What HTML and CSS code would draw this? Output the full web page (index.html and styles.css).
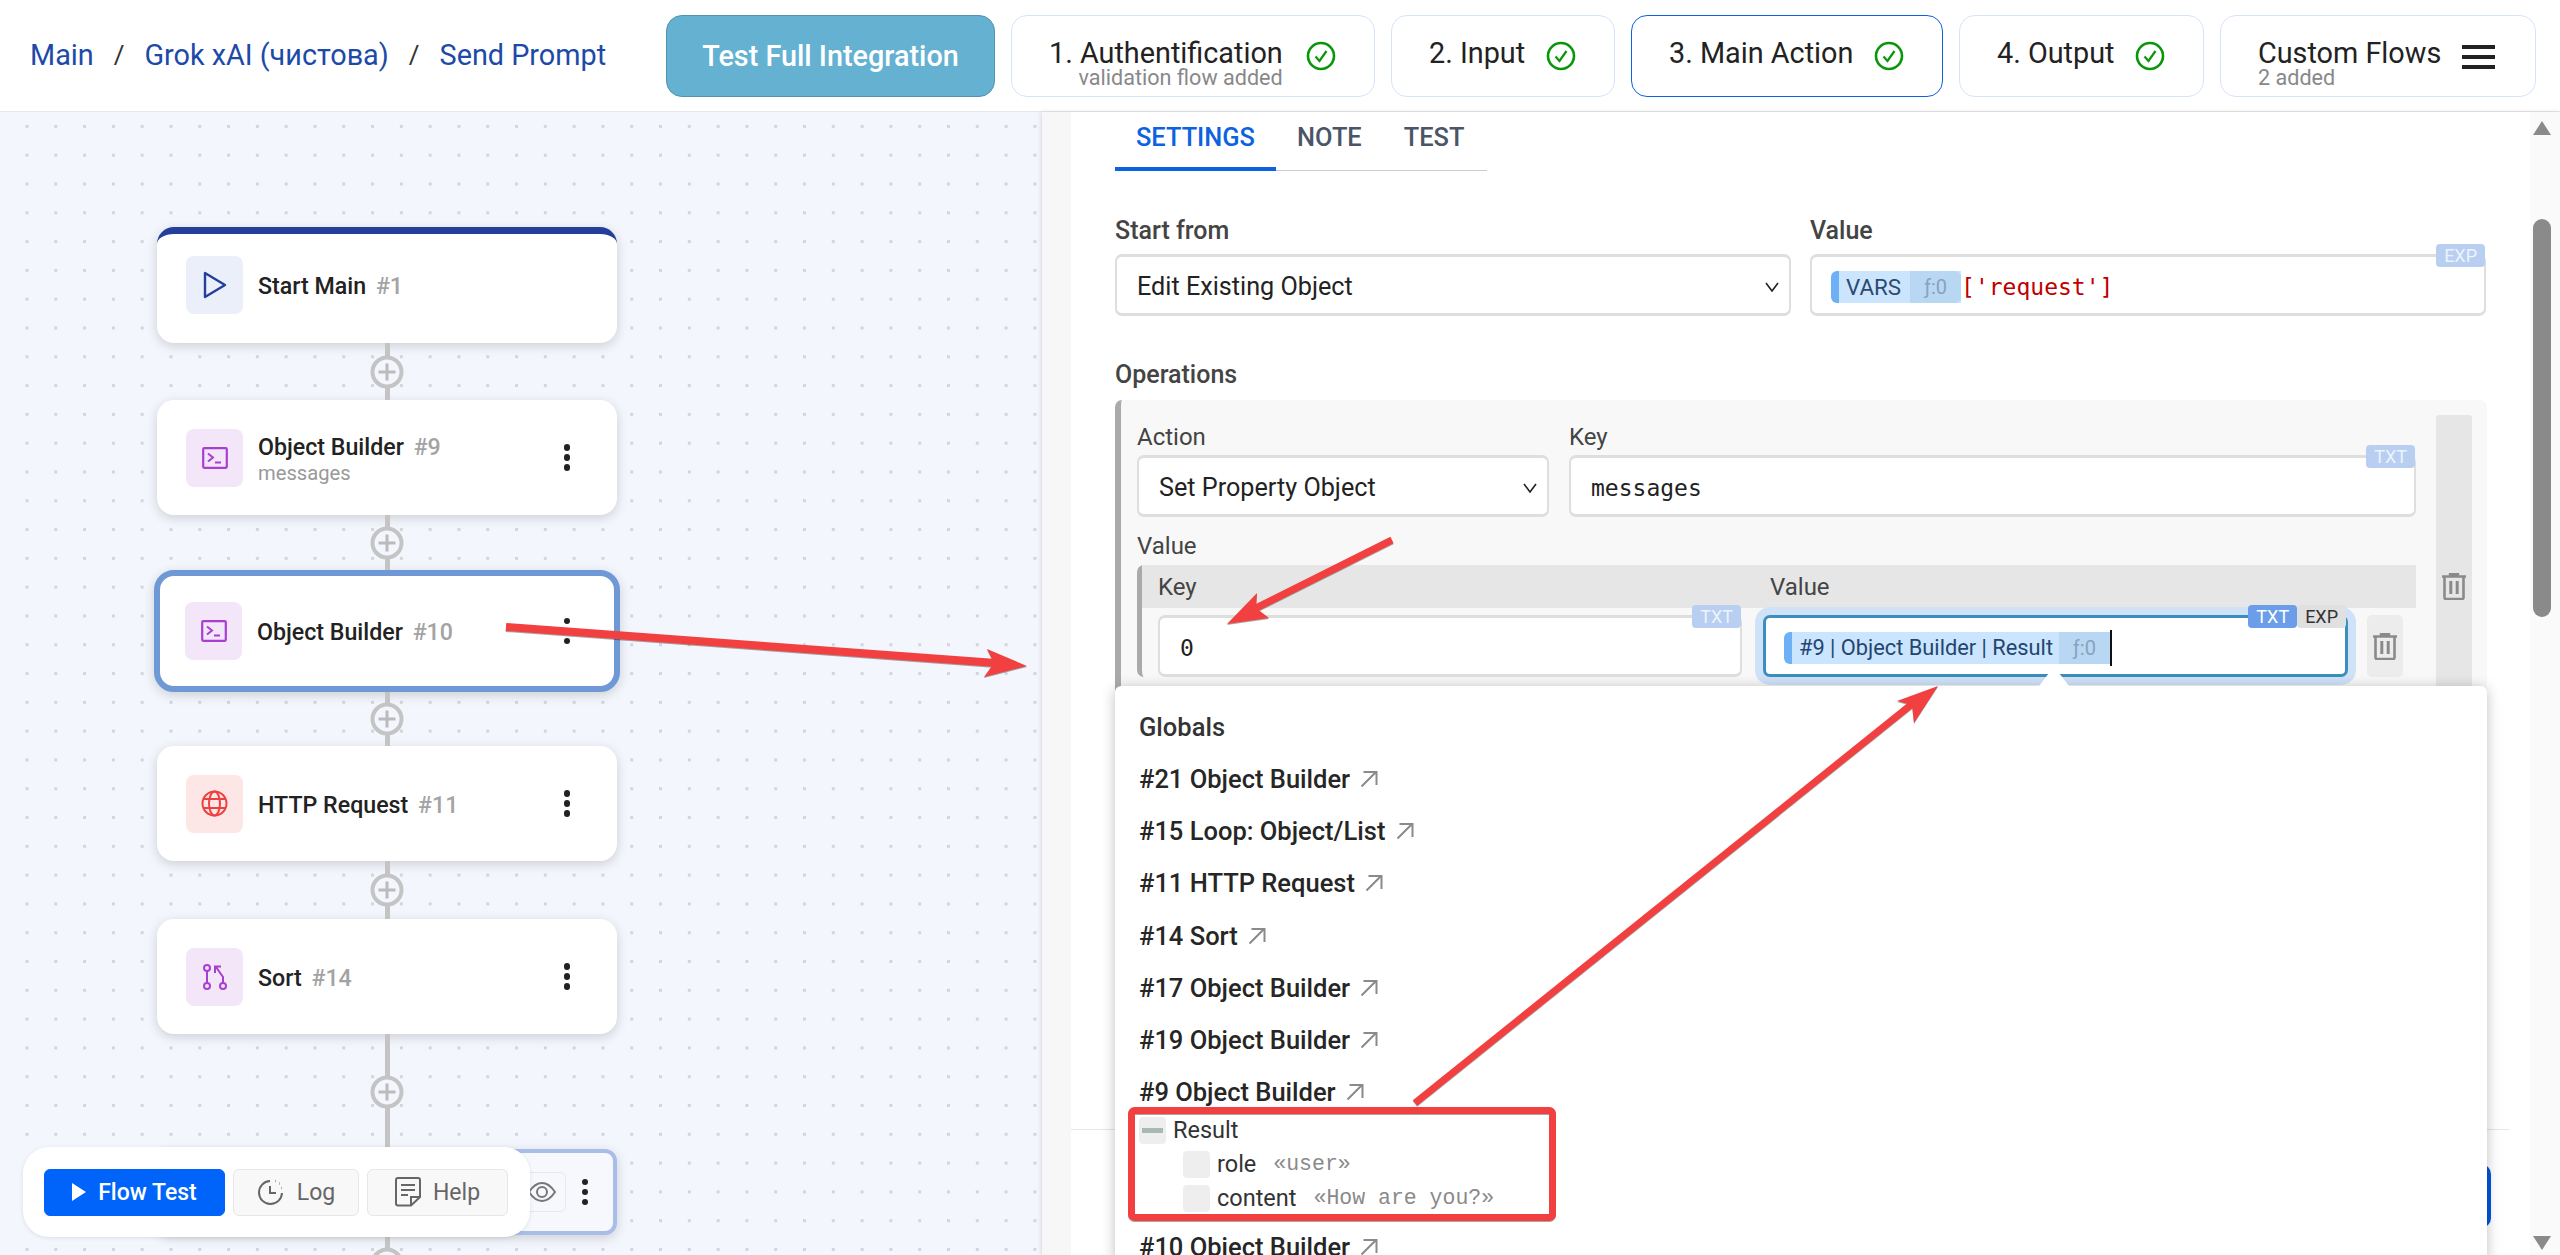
FILE: index.html
```html
<!DOCTYPE html>
<html lang="en">

<head>
    <meta charset="UTF-8">
    <meta name="viewport" content="width=device-width, initial-scale=1.0">
    <title>Send Prompt</title>
    <link rel="stylesheet" href="styles.css">
</head>

<body>
    <svg class="icon-defs" width="0" height="0">
        <symbol id="check" viewBox="0 0 30 30">
            <circle cx="15" cy="15" r="13" fill="none" stroke="currentColor" stroke-width="2.6" />
            <path d="M9.5 15.5l4 4.5 7-10" fill="none" stroke="currentColor" stroke-width="2.2" />
        </symbol>
        <symbol id="terminal" viewBox="0 0 26 22">
            <rect x="1.2" y="1.2" width="23.6" height="19.6" rx="1" fill="none" stroke="currentColor" stroke-width="2.2" />
            <path d="M6 6.5l5 4-5 4M13 15.5h6" fill="none" stroke="currentColor" stroke-width="2" />
        </symbol>
        <symbol id="trash" viewBox="0 0 24 27">
            <path d="M0 3.5h24M8 3V1h8v2" fill="none" stroke="currentColor" stroke-width="2.4" />
            <path d="M2.5 4v20.5a1.5 1.5 0 0 0 1.5 1.5h16a1.5 1.5 0 0 0 1.5-1.5V4" fill="none" stroke="currentColor" stroke-width="2.6" />
            <path d="M8.8 8v13M15.2 8v13" fill="none" stroke="currentColor" stroke-width="3" />
        </symbol>
        <symbol id="jump" viewBox="0 0 18 18">
            <path d="M1.5 16.5L16 2M3.5 2H16.5V15" fill="none" stroke="currentColor" stroke-width="2" />
        </symbol>
        <symbol id="chevron" viewBox="0 0 14 10">
            <path d="M1 1l6 8 6-8" fill="none" stroke="currentColor" stroke-width="1.6" />
        </symbol>
    </svg>

    <header class="topbar">
        <nav class="crumbs">
            <a>Main</a>
            <span class="crumb-sep">/</span>
            <a>Grok xAI (чистова)</a>
            <span class="crumb-sep">/</span>
            <a>Send Prompt</a>
        </nav>
        <div class="steps">
            <button type="button" class="test-btn">Test Full Integration</button>
            <div class="step step-auth">
                <div class="step-text">
                    <span>1. Authentification</span>
                    <small>validation flow added</small>
                </div>
                <svg class="step-check"><use href="#check" /></svg>
            </div>
            <div class="step step-input">
                <div class="step-text"><span>2. Input</span></div>
                <svg class="step-check"><use href="#check" /></svg>
            </div>
            <div class="step step-main active">
                <div class="step-text"><span>3. Main Action</span></div>
                <svg class="step-check"><use href="#check" /></svg>
            </div>
            <div class="step step-output">
                <div class="step-text"><span>4. Output</span></div>
                <svg class="step-check"><use href="#check" /></svg>
            </div>
            <div class="step step-custom">
                <div class="step-text">
                    <span>Custom Flows</span>
                    <small>2 added</small>
                </div>
                <div class="burger"><i></i><i></i><i></i></div>
            </div>
        </div>
    </header>

    <main class="workspace">
        <section class="canvas">
            <div class="flow">
                <div class="node node-start">
                    <div class="node-icon icon-blue">
                        <svg width="24" height="28" viewBox="0 0 24 28"><path d="M2 2v24l20-12z" fill="none" stroke="currentColor" stroke-width="2.4" stroke-linejoin="round" /></svg>
                    </div>
                    <div class="node-text">
                        <div class="node-title">Start Main <span>#1</span></div>
                    </div>
                </div>
                <div class="link link-57"><b></b></div>
                <div class="node">
                    <div class="node-icon icon-purple"><svg width="26" height="22"><use href="#terminal" /></svg></div>
                    <div class="node-text">
                        <div class="node-title">Object Builder <span>#9</span></div>
                        <div class="node-sub">messages</div>
                    </div>
                    <div class="dots"><i></i><i></i><i></i></div>
                </div>
                <div class="link link-55"><b></b></div>
                <div class="node node-selected">
                    <div class="node-icon icon-purple"><svg width="26" height="22"><use href="#terminal" /></svg></div>
                    <div class="node-text">
                        <div class="node-title">Object Builder <span>#10</span></div>
                    </div>
                    <div class="dots"><i></i><i></i><i></i></div>
                </div>
                <div class="link link-54"><b></b></div>
                <div class="node">
                    <div class="node-icon icon-red">
                        <svg width="27" height="27" viewBox="0 0 27 27" fill="none" stroke="currentColor" stroke-width="2">
                            <circle cx="13.5" cy="13.5" r="12" />
                            <ellipse cx="13.5" cy="13.5" rx="5.5" ry="12" />
                            <path d="M2.5 9h22M2.5 18h22" />
                        </svg>
                    </div>
                    <div class="node-text">
                        <div class="node-title">HTTP Request <span>#11</span></div>
                    </div>
                    <div class="dots"><i></i><i></i><i></i></div>
                </div>
                <div class="link link-58"><b></b></div>
                <div class="node">
                    <div class="node-icon icon-purple">
                        <svg width="26" height="26" viewBox="0 0 26 26" fill="none" stroke="currentColor" stroke-width="2">
                            <circle cx="5" cy="4" r="3" />
                            <circle cx="5" cy="22" r="3" />
                            <circle cx="21" cy="22" r="3" />
                            <path d="M5 7v12M21 19v-6l-7-10M13 9V2.5h6" />
                        </svg>
                    </div>
                    <div class="node-text">
                        <div class="node-title">Sort <span>#14</span></div>
                    </div>
                    <div class="dots"><i></i><i></i><i></i></div>
                </div>
                <div class="link link-115"><b></b></div>
                <div class="node node-last">
                    <div class="eye-btn">
                        <svg width="30" height="22" viewBox="0 0 30 22" fill="none" stroke="#777" stroke-width="2">
                            <path d="M2 11c4-6 8-9 13-9s9 3 13 9c-4 6-8 9-13 9S6 17 2 11z" />
                            <circle cx="15" cy="11" r="5" />
                        </svg>
                    </div>
                    <div class="dots"><i></i><i></i><i></i></div>
                </div>
                <div class="link link-57"><b></b></div>
            </div>

            <div class="toolbar">
                <button type="button" class="tool tool-run">
                    <svg width="14" height="18" viewBox="0 0 14 18"><path d="M0 0l14 9-14 9z" fill="#fff" /></svg>
                    Flow Test
                </button>
                <button type="button" class="tool tool-log">
                    <svg width="28" height="28" viewBox="0 0 28 28" fill="none" stroke="#666" stroke-width="2">
                        <path d="M13 3a11.5 11.5 0 1 0 12 12" />
                        <path d="M13 8v7h6" />
                        <path d="M18 3h.5M22 5.500h.5M24.500 10h.5" stroke-width="2.4" />
                    </svg>
                    Log
                </button>
                <button type="button" class="tool tool-help">
                    <svg width="26" height="30" viewBox="0 0 26 30" fill="none" stroke="#666" stroke-width="2">
                        <path d="M16 28.500H3a2 2 0 0 1-2-2V3a2 2 0 0 1 2-2h20a2 2 0 0 1 2 2v17z" />
                        <path d="M6 8h14M6 13h14M6 18h7M16 28v-8h8" />
                    </svg>
                    Help
                </button>
            </div>
        </section>

        <aside class="panel">
            <div class="panel-body">
                <div class="tabs">
                    <div class="tab active">SETTINGS</div>
                    <div class="tab">NOTE</div>
                    <div class="tab">TEST</div>
                </div>

                <div class="field-row">
                    <div>
                        <label class="label">Start from</label>
                        <div class="input select">Edit Existing Object <svg width="14" height="10"><use href="#chevron" /></svg></div>
                    </div>
                    <div>
                        <label class="label">Value</label>
                        <div class="input">
                            <span class="chip"><span class="chip-name">VARS</span><span class="chip-count">ƒ:0</span></span>
                            <code class="code-red">['request']</code>
                            <div class="badges"><span class="badge">EXP</span></div>
                        </div>
                    </div>
                </div>

                <label class="label label-ops">Operations</label>
                <div class="ops">
                    <div class="ops-main">
                        <div class="ops-row">
                            <div class="ops-action">
                                <label class="label-small">Action</label>
                                <div class="input select">Set Property Object <svg width="14" height="10"><use href="#chevron" /></svg></div>
                            </div>
                            <div class="ops-key">
                                <label class="label-small">Key</label>
                                <div class="input">
                                    <code>messages</code>
                                    <div class="badges"><span class="badge">TXT</span></div>
                                </div>
                            </div>
                        </div>
                        <label class="label-small label-value">Value</label>
                        <div class="nested">
                            <div class="nested-head">
                                <span class="nested-key">Key</span>
                                <span>Value</span>
                            </div>
                            <div class="nested-row">
                                <div class="input nested-input">
                                    <code>0</code>
                                    <div class="badges"><span class="badge">TXT</span></div>
                                </div>
                                <div class="input nested-input focused">
                                    <span class="chip chip-small"><span class="chip-name">#9 | Object Builder | Result</span><span class="chip-count">ƒ:0</span></span>
                                    <span class="caret"></span>
                                    <div class="badges"><span class="badge badge-on">TXT</span><span class="badge badge-off">EXP</span></div>
                                </div>
                                <div class="del-small"><svg width="24" height="27"><use href="#trash" /></svg></div>
                            </div>
                        </div>
                    </div>
                    <div class="del-col"><svg width="24" height="27"><use href="#trash" /></svg></div>
                </div>

                <div class="panel-foot">
                    <button type="button" class="save-btn"></button>
                </div>

                <!-- Variable picker opened from the focused input -->
                <div class="picker">
                    <div class="picker-tip"></div>
                    <div class="picker-title">Globals</div>
                    <div class="picker-item">#21 Object Builder <svg width="18" height="18"><use href="#jump" /></svg></div>
                    <div class="picker-item">#15 Loop: Object/List <svg width="18" height="18"><use href="#jump" /></svg></div>
                    <div class="picker-item">#11 HTTP Request <svg width="18" height="18"><use href="#jump" /></svg></div>
                    <div class="picker-item">#14 Sort <svg width="18" height="18"><use href="#jump" /></svg></div>
                    <div class="picker-item">#17 Object Builder <svg width="18" height="18"><use href="#jump" /></svg></div>
                    <div class="picker-item">#19 Object Builder <svg width="18" height="18"><use href="#jump" /></svg></div>
                    <div class="picker-item picker-open">#9 Object Builder <svg width="18" height="18"><use href="#jump" /></svg></div>
                    <div class="tree">
                        <div class="tree-row">
                            <span class="tree-box"><i></i></span>Result
                        </div>
                        <div class="tree-row tree-child">
                            <span class="tree-box"></span>role <em>«user»</em>
                        </div>
                        <div class="tree-row tree-child">
                            <span class="tree-box"></span>content <em>«How are you?»</em>
                        </div>
                    </div>
                    <div class="picker-item picker-next">#10 Object Builder <svg width="18" height="18"><use href="#jump" /></svg></div>
                </div>
            </div>

            <div class="scrollbar">
                <div class="scroll-up"></div>
                <div class="scroll-thumb"></div>
                <div class="scroll-down"></div>
            </div>
        </aside>
    </main>

    <!-- Red arrows drawn over the screenshot -->
    <svg class="annotations" width="2560" height="1255" viewBox="0 0 2560 1255">
        <g class="anno-stroke">
            <line x1="506" y1="627" x2="996" y2="663" stroke-width="8" />
            <line x1="1392" y1="540" x2="1256" y2="608" stroke-width="7" />
            <line x1="1415" y1="1103" x2="1912" y2="704" stroke-width="7" />
            <rect x="1131.500" y="1110.500" width="421" height="107" rx="3" fill="none" stroke-width="7" />
        </g>
        <g class="anno-fill">
            <polygon points="1027,666 987,649 994,663 984,677" />
            <polygon points="1227,624 1257,593 1256,608 1269,618" />
            <polygon points="1938,686 1897,701 1912,705 1914,723" />
        </g>
    </svg>
</body>

</html>
```

FILE: styles.css
```css
* {
    box-sizing: border-box;
}

body {
    font-family: 'Roboto', sans-serif;
    margin: 0;
    height: 100vh;
    display: flex;
    flex-direction: column;
    overflow: hidden;
    position: relative;
    background-color: #fff;
    color: #222;
}

button {
    font-family: inherit;
    cursor: pointer;
}

.icon-defs {
    position: absolute;
}

/* Top bar */
.topbar {
    height: 112px;
    flex: none;
    display: flex;
    align-items: center;
    justify-content: space-between;
    padding: 0 24px 0 30px;
    border-bottom: 1px solid #e8e8e8;
}

.crumbs {
    display: flex;
    align-items: center;
    margin-top: -2px;
    font-size: 28.8px;
    color: #1c4aa8;
}

.crumb-sep {
    color: #333;
    margin: 0 20px;
    font-size: 26px;
}

.steps {
    display: flex;
    align-items: stretch;
    gap: 16px;
    height: 82px;
}

.test-btn {
    width: 329px;
    background-color: #64b1d2;
    border: 1.5px solid #4e95ae;
    border-radius: 16px;
    color: #fff;
    font-size: 28.8px;
    font-weight: 500;
}

.step {
    display: flex;
    align-items: flex-start;
    justify-content: space-between;
    padding: 22px 38px 0 37px;
    border: 1.5px solid #d6e4fa;
    border-radius: 16px;
    background-color: #fff;
}

.step.active {
    border-color: #0d62e0;
}

.step-auth { width: 364px; }
.step-input { width: 224px; }
.step-main { width: 312px; }
.step-output { width: 245px; }
.step-custom { width: 316px; padding-right: 40px; }

.step-text {
    display: flex;
    flex-direction: column;
    align-items: flex-end;
    font-size: 28.8px;
    line-height: 30px;
}

.step-custom .step-text {
    align-items: flex-start;
}

.step-text small {
    font-size: 21.6px;
    line-height: 18px;
    margin-top: 1px;
    color: #888;
}

.step-check {
    width: 30px;
    height: 30px;
    margin-top: 3px;
    flex: none;
    color: #0a960a;
}

.burger {
    display: flex;
    flex-direction: column;
    gap: 6px;
    margin-top: 7px;
    flex: none;
}

.burger i {
    display: block;
    width: 33px;
    height: 4px;
    background-color: #222;
}

/* Main area */
.workspace {
    flex: 1;
    min-height: 0;
    display: flex;
}

.canvas {
    width: 1042px;
    flex: none;
    position: relative;
    overflow: hidden;
    padding-top: 115px;
    background-color: #f3f6fc;
    background-image: radial-gradient(circle, #d2d5d9 1.6px, transparent 1.7px);
    background-size: 28.8px 28.8px;
    background-position: 12.6px 0;
}

.flow {
    width: 466px;
    margin-left: 154px;
    display: flex;
    flex-direction: column;
    align-items: center;
}

.node {
    flex: none;
    width: 460px;
    height: 115px;
    display: flex;
    align-items: center;
    padding: 0 29px;
    background-color: #fff;
    border-radius: 17px;
    box-shadow: 0 3px 12px rgba(0, 0, 0, 0.16);
}

.node-start {
    height: 116px;
    border-top: 7px solid #243f9a;
    padding-bottom: 7px;
}

.node-selected {
    width: 466px;
    height: 122px;
    padding: 0 26px 0 25px;
    border: 6px solid #6f98d6;
    border-radius: 20px;
}

.node-last {
    height: 86px;
    justify-content: flex-end;
    gap: 16px;
    padding-right: 25px;
    background-color: #f7f8fd;
    border: 4px solid #aabdea;
    border-radius: 12px;
}

.node-icon {
    width: 57px;
    height: 58px;
    flex: none;
    display: flex;
    align-items: center;
    justify-content: center;
    border-radius: 8px;
}

.icon-blue {
    background-color: #ebeff9;
    color: #243f9a;
}

.icon-purple {
    background-color: #f3e6f9;
    color: #a83fd0;
}

.icon-red {
    background-color: #fde6e6;
    color: #ee4040;
}

.node-text {
    flex: 1;
    margin-left: 15px;
    padding-top: 2px;
}

.node-title {
    font-size: 23.2px;
    font-weight: 500;
    color: #222;
}

.node-title span {
    margin-left: 4px;
    color: #a3a3a3;
}

.node-sub {
    font-size: 20.2px;
    line-height: 22px;
    margin-top: 1px;
    color: #999;
}

.dots {
    display: flex;
    flex-direction: column;
    gap: 3.5px;
    margin-right: 18px;
}

.node-last .dots {
    margin-right: 0;
}

.dots i {
    display: block;
    width: 6.5px;
    height: 6.5px;
    border-radius: 50%;
    background-color: #222;
}

.eye-btn {
    width: 50px;
    height: 40px;
    display: flex;
    align-items: center;
    justify-content: flex-end;
    padding-right: 8px;
    border: 1px solid #e8e8e8;
    border-radius: 6px;
}

/* Connector between nodes */
.link {
    position: relative;
    width: 5px;
    flex: none;
    background-color: #c4c4c4;
}

.link b {
    position: absolute;
    left: 50%;
    top: 50%;
    width: 33px;
    height: 33px;
    transform: translate(-50%, -50%);
    border: 4px solid #c4c4c4;
    border-radius: 50%;
    background-color: #f3f6fc;
    background-image: linear-gradient(#bbb, #bbb), linear-gradient(#bbb, #bbb);
    background-size: 17px 3px, 3px 17px;
    background-position: center;
    background-repeat: no-repeat;
}

.link-54 { height: 54px; }
.link-55 { height: 55px; }
.link-57 { height: 57px; }
.link-58 { height: 58px; }
.link-115 { height: 115px; }

.toolbar {
    position: absolute;
    left: 23px;
    top: 1035px;
    width: 507px;
    height: 90px;
    display: flex;
    align-items: center;
    gap: 8px;
    padding-left: 21px;
    background-color: #fff;
    border-radius: 26px;
    box-shadow: 0 1px 4px rgba(0, 0, 0, 0.1);
}

.tool {
    height: 47px;
    display: flex;
    align-items: center;
    justify-content: center;
    gap: 12px;
    background-color: #f8f8f8;
    border: 1px solid #e6e6e6;
    border-radius: 6px;
    color: #666;
    font-size: 23px;
}

.tool-run {
    width: 181px;
    background-color: #0064fa;
    border-color: #0064fa;
    color: #fff;
    font-weight: 500;
}

.tool-log { width: 126px; }
.tool-help { width: 141px; }

/* Settings panel */
.panel {
    flex: 1;
    min-width: 0;
    display: flex;
    background-color: #fff;
    border-left: 29px solid #f7f7f7;
    box-shadow: -1px 0 4px rgba(0, 0, 0, 0.12);
    position: relative;
}

.panel-body {
    flex: 1;
    min-width: 0;
    position: relative;
    overflow: hidden;
    padding: 0 43px 0 44px;
}

.tabs {
    width: 372px;
    height: 59px;
    display: flex;
    border-bottom: 1px solid #ccc;
}

.tab {
    padding: 0 21px;
    line-height: 51px;
    font-size: 25.4px;
    font-weight: 500;
    color: #4a5568;
}

.tab.active {
    height: 59px;
    border-bottom: 4px solid #0d62e0;
    color: #0d62e0;
}

.label {
    display: block;
    padding-top: 2px;
    font-size: 25px;
    font-weight: 500;
    line-height: 30px;
    margin-bottom: 8px;
    color: #444;
}

.field-row {
    display: grid;
    grid-template-columns: 676px 676px;
    gap: 19px;
    margin-top: 43px;
}

.label-ops {
    margin: 42px 0 10px;
}

.input {
    position: relative;
    height: 62px;
    display: flex;
    align-items: center;
    padding: 3px 20px 0;
    background-color: #fff;
    border: 3px solid #dedede;
    border-left-width: 2px;
    border-right-width: 2px;
    border-radius: 7px;
    font-size: 25.2px;
    color: #222;
}

.select {
    justify-content: space-between;
    padding-right: 10px;
    padding-left: 20px;
}

code {
    font-family: 'DejaVu Sans Mono', monospace;
    font-size: 23px;
}

.code-red {
    color: #c00000;
}

.badges {
    position: absolute;
    right: -1px;
    top: -13px;
    display: flex;
}

.badge {
    height: 23px;
    padding: 0 8px;
    font-size: 18px;
    line-height: 23px;
    border-radius: 4px;
    background-color: #b8cff2;
    color: #edf3fc;
}

.badge-on {
    background-color: #6b9de8;
    color: #fff;
}

.badge-off {
    background-color: #e0e0e0;
    color: #333;
}

.chip {
    height: 32px;
    display: inline-flex;
    align-items: center;
    margin-left: -1px;
    border-left: 8px solid #6eb0f5;
    border-radius: 6px 0 0 6px;
    background-color: #cce5ff;
    font-size: 22.4px;
    color: #2c4a6e;
}

.chip-name {
    padding: 0 9px 0 7px;
}

.chip-count {
    align-self: stretch;
    display: flex;
    align-items: center;
    padding: 0 14px;
    background-color: #b8d7f3;
    border-radius: 0 6px 6px 0;
    font-size: 20px;
    color: #8aa2bd;
}

.chip-small {
    margin-left: 0;
    font-size: 21.8px;
    color: #23466f;
}

.chip-small .chip-name {
    padding-right: 6px;
}

.chip-small .chip-count {
    border-radius: 0;
}

.caret {
    width: 2px;
    height: 36px;
    background-color: #111;
}

/* Operations block */
.ops {
    display: flex;
    gap: 20px;
    min-height: 690px;
    padding: 15px 16px 0 16px;
    background-color: #f8f8f8;
    border-left: 6px solid #aaa;
    border-radius: 7px;
}

.ops-main {
    width: 1279px;
    flex: none;
}

.ops-row {
    display: flex;
    gap: 20px;
}

.ops-action {
    width: 412px;
    flex: none;
}

.ops-key {
    flex: 1;
}

.label-small {
    display: block;
    padding-top: 7px;
    line-height: 30px;
    margin-bottom: 3px;
    font-size: 24px;
    color: #444;
}

.label-value {
    padding-top: 0;
    margin-top: 14px;
    margin-bottom: 4px;
}

.nested {
    border-left: 5px solid #aaa;
    border-radius: 7px 0 0 7px;
}

.nested-head {
    display: flex;
    height: 43px;
    align-items: center;
    padding-left: 16px;
    background-color: #e6e6e6;
    font-size: 24px;
    color: #444;
}

.nested-key {
    width: 612px;
}

.nested-row {
    display: flex;
    align-items: flex-start;
    padding: 7px 0 0 16px;
    gap: 21px;
}

.nested-input {
    width: 584px;
    padding-left: 20px;
}

.focused {
    width: 585px;
    border: 3px solid #3a8fbd;
    box-shadow: 0 0 0 8px #d0e2f8;
    padding-left: 18px;
}

.del-small {
    width: 36px;
    height: 62px;
    margin-left: -2px;
    display: flex;
    align-items: center;
    justify-content: center;
    background-color: #ececec;
    border-radius: 5px;
    color: #8a8a8a;
}

.del-col {
    width: 36px;
    flex: none;
    display: flex;
    justify-content: center;
    padding-top: 158px;
    background-color: #e6e6e6;
    border-radius: 3px 3px 0 0;
    color: #8a8a8a;
}

.panel-foot {
    margin: 39px -22px 0 -44px;
    padding: 34px 18px 0 0;
    display: flex;
    justify-content: flex-end;
    border-top: 1px solid #e6e6e6;
}

.save-btn {
    width: 200px;
    height: 64px;
    border: none;
    border-radius: 10px;
    background-color: #0056e0;
}

/* Variable picker */
.picker {
    position: absolute;
    left: 44px;
    top: 574px;
    bottom: -10px;
    width: 1372px;
    padding: 24px 24px 0 24px;
    background-color: #fff;
    border-radius: 6px;
    box-shadow: 0 2px 14px rgba(0, 0, 0, 0.25);
}

.picker-tip {
    position: absolute;
    left: 924px;
    top: -14px;
    width: 30px;
    height: 14px;
    background-color: #fff;
    clip-path: polygon(36% 0, 64% 0, 100% 100%, 0 100%);
}

.picker-title {
    height: 34px;
    line-height: 34px;
    font-size: 25.5px;
    font-weight: 500;
    color: #333;
    margin-bottom: 18px;
}

.picker-item {
    height: 52.2px;
    line-height: 34px;
    font-size: 25.5px;
    font-weight: 500;
    color: #262626;
}

.picker-item svg {
    margin-left: 4px;
    color: #8a8a8a;
}

.picker-open {
    height: 38px;
}

.tree {
    font-size: 23.5px;
    color: #333;
}

.tree-row {
    height: 34px;
    display: flex;
    align-items: center;
    gap: 7px;
}

.tree-child {
    padding-left: 44px;
}

.tree-box {
    width: 27px;
    height: 27px;
    display: flex;
    align-items: center;
    justify-content: center;
    background-color: #eee;
    border-radius: 4px;
}

.tree-box i {
    display: block;
    width: 21px;
    height: 5px;
    background-color: #aab8b5;
}

.tree-row em {
    margin-left: 10px;
    font-family: 'Liberation Mono', monospace;
    font-style: normal;
    font-size: 21.5px;
    color: #8a8a8a;
}

.picker-next {
    margin-top: 15px;
}

/* Scrollbar */
.scrollbar {
    width: 30px;
    flex: none;
    display: flex;
    flex-direction: column;
    align-items: center;
    padding: 9px 0 5px 0;
    background-color: #fafafa;
}

.scroll-up,
.scroll-down {
    width: 18px;
    height: 14px;
    background-color: #8a8a8a;
    margin-right: 6px;
}

.scroll-up {
    clip-path: polygon(50% 0, 100% 100%, 0 100%);
}

.scroll-down {
    margin-top: auto;
    clip-path: polygon(0 0, 100% 0, 50% 100%);
}

.scroll-thumb {
    width: 18px;
    height: 398px;
    margin: 84px 6px 0 0;
    background-color: #8a8a8a;
    border-radius: 9px;
}

/* Annotation layer */
.annotations {
    position: absolute;
    left: 0;
    top: 0;
    pointer-events: none;
    filter: drop-shadow(0 1px 0 rgba(0, 0, 0, 0.35));
}

.anno-stroke {
    stroke: #f23f3f;
}

.anno-fill {
    fill: #f23f3f;
}
```
